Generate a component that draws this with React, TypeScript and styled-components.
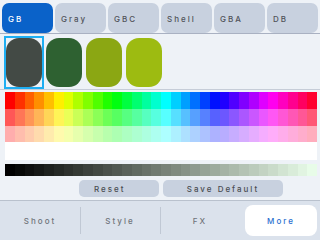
import styled, { createGlobalStyle } from "styled-components";

const GlobalStyle = createGlobalStyle`
  html, body {
    margin: 0;
    padding: 0;
    background: #eef2f7;
  }
  body {
    width: 320px;
    height: 240px;
    overflow: hidden;
    font-family: Inter, "DejaVu Sans", sans-serif;
  }
`;

const tabs = ["GB", "Gray", "GBC", "Shell", "GBA", "DB"];
const swatches = ["#434a45", "#2e6131", "#8ba713", "#9dbb11"];
const navItems = ["Shoot", "Style", "FX", "More"];

const hues = Array.from({ length: 32 }, (_, i) => i * 11.25);
const grays = Array.from({ length: 32 }, (_, i) => {
  const t = i / 31;
  return `rgb(${Math.round(232 * t)}, ${Math.round(252 * t)}, ${Math.round(232 * t)})`;
});

function App() {
  return (
    <Screen>
      <GlobalStyle />
      <TabBar>
        {tabs.map((t, i) => (
          <Tab key={t} $active={i === 0}>
            {t}
          </Tab>
        ))}
      </TabBar>

      <SwatchRow>
        {swatches.map((c, i) => (
          <SwatchSlot key={c} $selected={i === 0}>
            <Swatch $color={c} />
          </SwatchSlot>
        ))}
      </SwatchRow>

      <Palette>
        {hues.map((h) => (
          <Cell key={`a${h}`} $color={`hsl(${h}, 100%, 50%)`} />
        ))}
        {hues.map((h) => (
          <Cell key={`b${h}`} $color={`hsl(${h}, 100%, 67%)`} />
        ))}
        {hues.map((h) => (
          <Cell key={`c${h}`} $color={`hsl(${h}, 100%, 84%)`} />
        ))}
        <BlankRow />
      </Palette>

      <GrayRow>
        {grays.map((g) => (
          <Cell key={g} $color={g} />
        ))}
      </GrayRow>

      <ButtonRow>
        <ActionButton $width={80} $align="flex-start">
          Reset
        </ActionButton>
        <ActionButton $width={120} $align="center">
          Save Default
        </ActionButton>
      </ButtonRow>

      <Nav>
        {navItems.map((n, i) => (
          <NavItem key={n} $divider={i === 1 || i === 2}>
            <NavLabel $active={n === "More"}>{n}</NavLabel>
          </NavItem>
        ))}
      </Nav>
    </Screen>
  );
}

const Screen = styled.div`
  width: 320px;
  height: 240px;
  display: flex;
  flex-direction: column;
  background: #eef2f7;
`;

const TabBar = styled.div`
  display: flex;
  gap: 2px;
  padding: 3px 2px 0;
  height: 30px;
  border-bottom: 1px solid #a9b1c2;
`;

const Tab = styled.div<{ $active: boolean }>`
  flex: 1;
  display: flex;
  align-items: center;
  padding-left: 6px;
  padding-top: 1px;
  border-radius: 7px;
  background: ${(p) => (p.$active ? "#0a62c9" : "#c8d1df")};
  color: ${(p) => (p.$active ? "#ffffff" : "#505359")};
  font-size: 8px;
  font-weight: 500;
  letter-spacing: 2px;
`;

const SwatchRow = styled.div`
  display: flex;
  padding: 2px 0 0 4px;
  height: 53px;
  border-bottom: 1px solid #c6cdd8;
`;

const SwatchSlot = styled.div<{ $selected: boolean }>`
  width: 36px;
  height: 49px;
  border: 2px solid ${(p) => (p.$selected ? "#1eaef2" : "transparent")};
`;

const Swatch = styled.div<{ $color: string }>`
  width: 100%;
  height: 100%;
  border-radius: 13px;
  background: ${(p) => p.$color};
`;

const Palette = styled.div`
  display: grid;
  grid-template-columns: repeat(32, 1fr);
  grid-template-rows: 17px 17px 16px 18px;
  margin: 2px 3px 0 5px;
`;

const Cell = styled.div<{ $color: string }>`
  background: ${(p) => p.$color};
`;

const BlankRow = styled.div`
  grid-column: 1 / -1;
  background: #ffffff;
`;

const GrayRow = styled.div`
  display: grid;
  grid-template-columns: repeat(32, 1fr);
  height: 12px;
  margin: 4px 3px 0 5px;
`;

const ButtonRow = styled.div`
  display: flex;
  gap: 4px;
  padding-left: 79px;
  margin-top: 4px;
  height: 17px;
`;

const ActionButton = styled.div<{ $width: number; $align: string }>`
  width: ${(p) => p.$width}px;
  display: flex;
  align-items: center;
  justify-content: ${(p) => p.$align};
  padding-left: ${(p) => (p.$align === "flex-start" ? "15px" : "0")};
  box-sizing: border-box;
  border-radius: 5px;
  background: #c8d1df;
  color: #4a4d52;
  font-size: 8px;
  font-weight: 500;
  letter-spacing: 2px;
`;

const Nav = styled.div`
  margin-top: 3px;
  flex: 1;
  display: flex;
  border-top: 1px solid #b9c1cd;
  background: #dbe2ec;
`;

const NavItem = styled.div<{ $divider: boolean }>`
  width: 80px;
  display: flex;
  align-items: center;
  justify-content: center;
  position: relative;

  &::before {
    content: "";
    display: ${(p) => (p.$divider ? "block" : "none")};
    position: absolute;
    left: 0;
    top: 6px;
    bottom: 6px;
    width: 1px;
    background: #c0c8d4;
  }
`;

const NavLabel = styled.div<{ $active: boolean }>`
  display: flex;
  align-items: center;
  justify-content: center;
  width: ${(p) => (p.$active ? "72px" : "auto")};
  height: ${(p) => (p.$active ? "31px" : "auto")};
  margin-left: ${(p) => (p.$active ? "2px" : "0")};
  border-radius: 8px;
  background: ${(p) => (p.$active ? "#ffffff" : "transparent")};
  color: ${(p) => (p.$active ? "#2a6fd0" : "#70747a")};
  font-size: 8px;
  font-weight: 500;
  letter-spacing: 2px;
`;

export default App;
